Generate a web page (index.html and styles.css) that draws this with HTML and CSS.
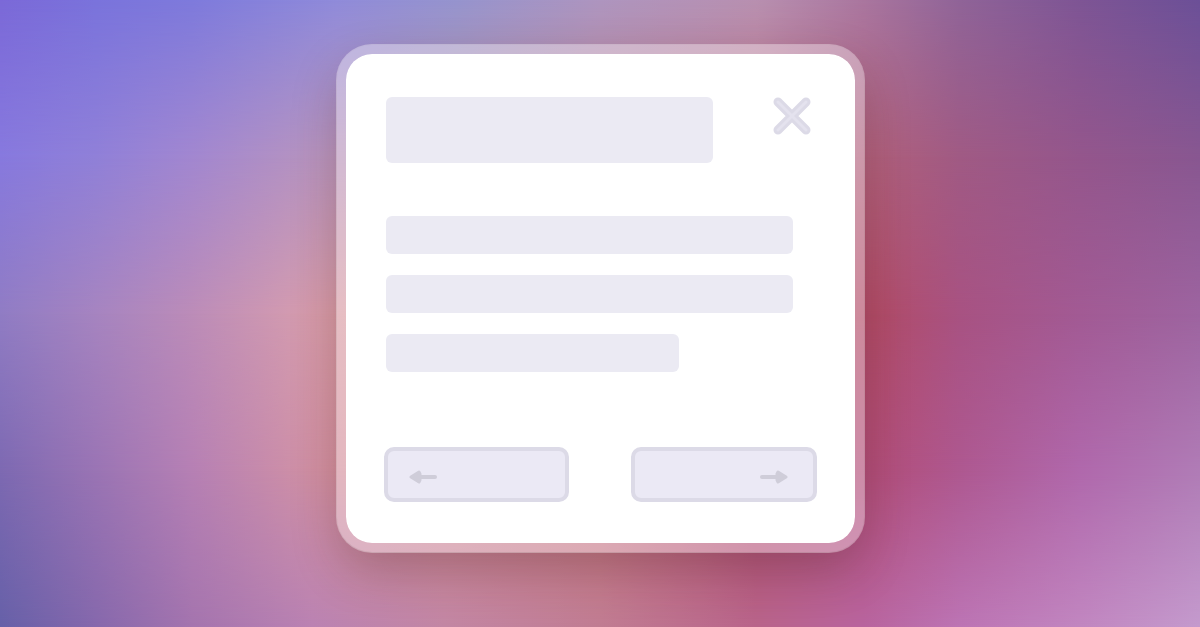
FILE: index.html
```html
<!DOCTYPE html>
<html lang="en">
<head>
<meta charset="utf-8">
<meta name="viewport" content="width=device-width, initial-scale=1">
<title>Dialog</title>
<link rel="stylesheet" href="styles.css">
</head>
<body>
<div class="backdrop" aria-hidden="true">
  <div class="band band-1"></div>
  <div class="band band-2"></div>
  <div class="band band-3"></div>
  <div class="band band-4"></div>
  <div class="band band-5"></div>
</div>
<main class="stage">
  <section class="card" role="dialog" aria-label="Dialog">
    <header class="head">
      <div class="block title"></div>
      <button class="close" type="button" aria-label="Close">
        <svg width="38" height="38" viewBox="0 0 38 38" fill="none" stroke-linecap="round">
          <path d="M5 5l28 28M33 5L5 33" stroke="#dcdae7" stroke-width="9"/>
          <path d="M5 5l28 28M33 5L5 33" stroke="#e4e2ee" stroke-width="3"/>
        </svg>
      </button>
    </header>
    <div class="lines">
      <div class="block line"></div>
      <div class="block line"></div>
      <div class="block line line-short"></div>
    </div>
    <footer class="actions">
      <button class="nav" type="button" aria-label="Previous">
        <svg width="28" height="14" viewBox="0 0 28 14" fill="#cfcdd9" stroke="#cfcdd9" stroke-linecap="round" stroke-linejoin="round">
          <path d="M10 7h16" stroke-width="4"/>
          <path d="M2 7l8-5 1 2v6l-1 2z" stroke-width="3"/>
        </svg>
      </button>
      <button class="nav nav-next" type="button" aria-label="Next">
        <svg width="28" height="14" viewBox="0 0 28 14" fill="#cfcdd9" stroke="#cfcdd9" stroke-linecap="round" stroke-linejoin="round">
          <path d="M2 7h16" stroke-width="4"/>
          <path d="M26 7l-8-5-1 2v6l1 2z" stroke-width="3"/>
        </svg>
      </button>
    </footer>
  </section>
</main>
</body>
</html>
```
FILE: styles.css
```css
* {
  box-sizing: border-box;
}

body {
  display: grid;
  min-height: 100vh;
  margin: 0;
  font-family: Inter, "Liberation Sans", sans-serif;
}

.backdrop,
.stage {
  grid-area: 1 / 1;
}

/* Each band fades in over the one above it, giving a soft colour mesh. */
.backdrop {
  display: grid;
  overflow: hidden;
}

.band {
  grid-area: 1 / 1;
}

.band-1 {
  background: linear-gradient(to right, #7b69d8, #7a73dc 8%, #7e7adc 16%, #908bda 28%, #9694ce 38%, #ae95bf 50%, #b890b0 63%, #aa769f 72%, #906498 80%, #7e5595 90%, #6c5098);
}

.band-2 {
  background: linear-gradient(to right, #8779de, #9080d8 8%, #a287d0 16%, #bb96bc 28%, #bd94a8 38%, #c28696 50%, #c4748a 63%, #b0607c 73%, #a05a84 80%, #94568c 90%, #885791);
  mask-image: linear-gradient(transparent, #000 25%);
}

.band-3 {
  background: linear-gradient(to right, #907cc4, #a684c0 8%, #bc8cb8 16%, #d29ab0 24%, #dc9ca0 30%, #d07c84 50%, #b85068 63%, #b24c68 73%, #a85282 80%, #a25a94 90%, #9d64a0);
  mask-image: linear-gradient(transparent 25%, #000 50%);
}

.band-4 {
  background: linear-gradient(to right, #7d69b2, #9a74b4 8%, #b680b4 16%, #cc8ea8 24%, #d8929a 30%, #d07c84 50%, #b85074 63%, #b24e7a 73%, #ae5890 80%, #b068ac 90%, #b07cb6);
  mask-image: linear-gradient(transparent 50%, #000 75%);
}

.band-5 {
  background: linear-gradient(to right, #6660a8, #8668ac 8%, #a474ae 16%, #ba82b2 26%, #c286a4 37%, #c07c92 50%, #b8648a 63%, #b8649e 72%, #bc74b4 80%, #c186c0 90%, #c49acd);
  mask-image: linear-gradient(transparent 75%, #000);
}

.stage {
  z-index: 1;
  display: flex;
  align-items: center;
  justify-content: center;
  padding: 20px 20px 50px;
}

.card {
  width: 100%;
  max-width: 529px;
  padding: 43px 38px 41px;
  border: 10px solid rgb(255 255 255 / 35%);
  border-radius: 36px;
  background: #fff padding-box;
  box-shadow: 0 20px 48px -4px rgb(60 20 20 / 28%);
}

.head {
  display: flex;
  align-items: flex-start;
  justify-content: space-between;
  padding: 0 6px 0 2px;
}

.block {
  border-radius: 6px;
  background: #ebeaf3;
}

.title {
  width: 77%;
  height: 66px;
}

.close {
  display: flex;
  padding: 0;
  border: 0;
  background: none;
  cursor: pointer;
}

.lines {
  display: grid;
  gap: 21px;
  margin: 53px 24px 75px 2px;
}

.line {
  height: 38px;
}

.line-short {
  width: 72%;
}

.actions {
  display: grid;
  grid-template-columns: 1fr 1fr;
  gap: 62px;
}

.nav {
  display: flex;
  align-items: center;
  height: 55px;
  padding: 4px 21px 0;
  border: 4px solid #dcdae7;
  border-radius: 10px;
  background: #ebe9f5;
  cursor: pointer;
}

.nav-next {
  justify-content: flex-end;
  padding-right: 25px;
}
```
